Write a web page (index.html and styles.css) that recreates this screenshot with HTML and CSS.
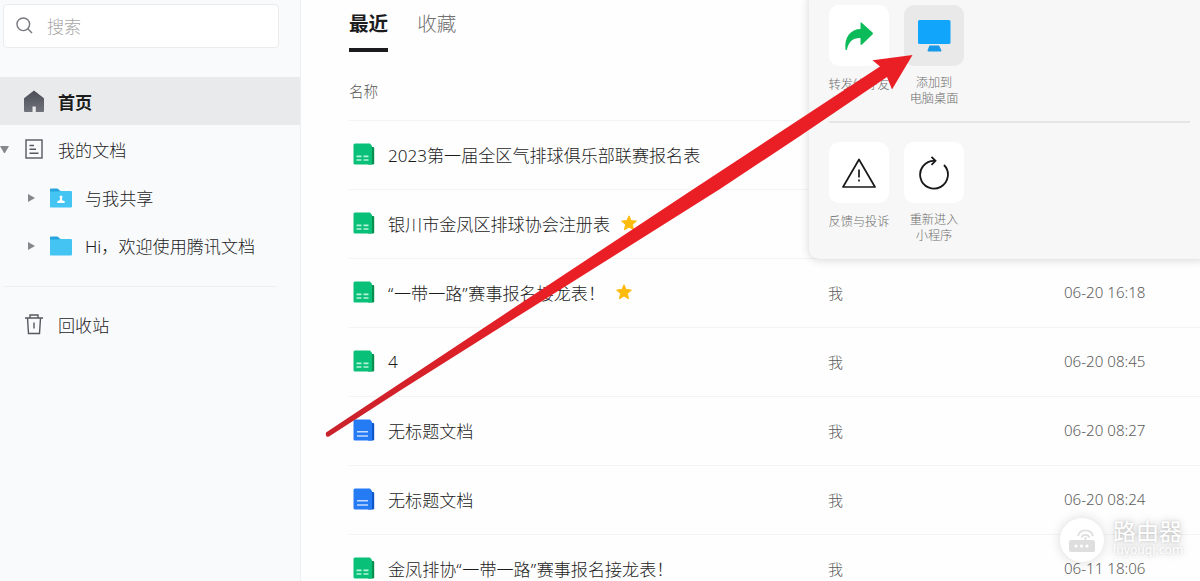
FILE: index.html
```html
<!DOCTYPE html>
<html lang="zh-CN">
<head>
  <meta charset="UTF-8" />
  <title>腾讯文档</title>
  <link rel="stylesheet" href="styles.css">
</head>
<body>
  <svg class="symbols">
    <symbol id="sheet" viewBox="0 0 22 22">
      <path d="M15 4h5.200a1 1 0 0 1 1 1v15.200a1.300 1.300 0 0 1-1.300 1.300H15z" fill="#078f50"/>
      <path d="M2 .5h15L19 3v18.500H2A1.500 1.500 0 0 1 .5 20V2A1.500 1.500 0 0 1 2 .5z" fill="#08c077"/>
      <path d="M3.500 13.300h5M10.500 13.300h5M3.500 17h5M10.500 17h5" stroke="#b4f5d8" stroke-width="1.700"/>
    </symbol>
    <symbol id="doc" viewBox="0 0 22 22">
      <path d="M15 4h5.200a1 1 0 0 1 1 1v15.200a1.300 1.300 0 0 1-1.300 1.300H15z" fill="#1055c9"/>
      <path d="M2 .5h15L19 3v18.500H2A1.500 1.500 0 0 1 .5 20V2A1.500 1.500 0 0 1 2 .5z" fill="#257bf4"/>
      <path d="M4 12.800h11M4 17h11" stroke="#c4dcff" stroke-width="1.600"/>
    </symbol>
    <symbol id="star" viewBox="0 0 16 16">
      <path d="M8 .8l2.100 4.800 5.300.5-4 3.500 1.200 5.200L8 12.100l-4.600 2.700 1.200-5.200-4-3.500 5.300-.5z" fill="#fdbb0c" stroke="#fdbb0c" stroke-linejoin="round"/>
    </symbol>
    <symbol id="folder" viewBox="0 0 22 20">
      <path d="M0 1.500Q0 .5 1 .5h6.500l3 2.500H21v10H0z" fill="#28a4dc"/>
      <path d="M0 3.500h7.500L10.500 3H21q1 0 1 1v14.500q0 1-1 1H1q-1 0-1-1z" fill="#43c4f3"/>
    </symbol>
  </svg>

  <div class="app">
    <div class="sidebar">
      <div class="search">
        <svg width="17" height="17" viewBox="0 0 17 17" fill="none" stroke="#77797e" stroke-width="1.400"><circle cx="7.300" cy="7.300" r="6.300"/><path d="M11.800 11.800l4.200 4.200"/></svg>
        <span>搜索</span>
      </div>
      <div class="nav">
        <div class="nav-item active">
          <svg class="nav-icon" viewBox="0 0 20 22">
            <defs><linearGradient id="roof" x2="0" y2="1"><stop stop-color="#4a4d55"/><stop offset="1" stop-color="#70737c"/></linearGradient></defs>
            <path d="M10 .5l10 7.800V21q0 1-1 1h-7.200v-5.500H8.500V22H1q-1 0-1-1V8.300z" fill="url(#roof)"/>
          </svg>
          <span>首页</span>
        </div>
        <div class="nav-item">
          <i class="caret down"></i>
          <svg class="nav-icon" viewBox="0 0 20 22" fill="none" stroke="#55585e" stroke-width="1.400"><rect x="2" y="2" width="16" height="18"/><path d="M5.500 7.500h4.500M5.500 11.300h6.500M5.500 15.200h9"/></svg>
          <span>我的文档</span>
        </div>
        <div class="nav-item sub">
          <i class="caret"></i>
          <svg class="folder" viewBox="0 0 22 20"><use href="#folder"/><circle cx="11" cy="9" r="1.500" fill="#fff"/><path d="M10.300 9h1.400l.5 3.300 2.500 1v1.700H7.300v-1.700l2.500-1z" fill="#fff"/></svg>
          <span>与我共享</span>
        </div>
        <div class="nav-item sub">
          <i class="caret"></i>
          <svg class="folder"><use href="#folder"/></svg>
          <span>Hi，欢迎使用腾讯文档</span>
        </div>
      </div>
      <div class="nav-item trash">
        <svg class="nav-icon" viewBox="0 0 20 22" fill="none" stroke="#55585e" stroke-width="1.400"><path d="M1 5h18M6 5V2h8v3M3.500 5l1 15.500h11l1-15.500M10 9.500v6"/></svg>
        <span>回收站</span>
      </div>
    </div>

    <div class="main">
      <div class="tabs">
        <div class="tab current">最近</div>
        <div class="tab">收藏</div>
      </div>
      <div class="list-head">名称</div>
      <div class="row">
        <div class="name"><svg class="file"><use href="#sheet"/></svg>2023第一届全区气排球俱乐部联赛报名表</div>
      </div>
      <div class="row">
        <div class="name"><svg class="file"><use href="#sheet"/></svg>银川市金凤区排球协会注册表<svg class="star"><use href="#star"/></svg></div>
      </div>
      <div class="row">
        <div class="name"><svg class="file"><use href="#sheet"/></svg><span><b>“</b>一带一路<b>”</b>赛事报名接龙表！</span><svg class="star"><use href="#star"/></svg></div>
        <div class="owner">我</div>
        <div class="date">06-20 16:18</div>
      </div>
      <div class="row">
        <div class="name"><svg class="file"><use href="#sheet"/></svg>4</div>
        <div class="owner">我</div>
        <div class="date">06-20 08:45</div>
      </div>
      <div class="row">
        <div class="name"><svg class="file"><use href="#doc"/></svg>无标题文档</div>
        <div class="owner">我</div>
        <div class="date">06-20 08:27</div>
      </div>
      <div class="row">
        <div class="name"><svg class="file"><use href="#doc"/></svg>无标题文档</div>
        <div class="owner">我</div>
        <div class="date">06-20 08:24</div>
      </div>
      <div class="row">
        <div class="name"><svg class="file"><use href="#sheet"/></svg><span>金凤排协<b>“</b>一带一路<b>”</b>赛事报名接龙表！</span></div>
        <div class="owner">我</div>
        <div class="date">06-11 18:06</div>
      </div>
    </div>
  </div>

  <div class="menu">
    <div class="menu-group">
      <div class="menu-item">
        <div class="tile"><svg width="30" height="30" viewBox="0 0 30 30"><path d="M1.500 28.500C0 16 7 8 16.500 8V2.500q0-2 1.500-.5l10.500 9.500q1 1 0 2L18 23.500q-1.500 1-1.500-.5v-6C10 16.500 4.500 20 3 28.500q-.7 1-1.500 0z" fill="#0bbb59"/></svg></div>
        <div class="label single">转发给好友</div>
      </div>
      <div class="menu-item">
        <div class="tile pressed"><svg width="34" height="34" viewBox="0 0 34 34" fill="#11a5fb"><rect x="1" y="1" width="32.500" height="24" rx="1.500"/><path d="M12.500 26.500h9.500l2.500 5q0 1-1 1H11.500q-1 0-1-1z" fill="#1599e8"/></svg></div>
        <div class="label">添加到<br>电脑桌面</div>
      </div>
    </div>
    <div class="menu-group">
      <div class="menu-item">
        <div class="tile"><svg width="34" height="34" viewBox="0 0 34 34" fill="none" stroke="#17181a" stroke-width="1.700" stroke-linejoin="round"><path d="M17 3.500L33 31H1z"/><path d="M17 13.500v8M17 23.500v2"/></svg></div>
        <div class="label single">反馈与投诉</div>
      </div>
      <div class="menu-item">
        <div class="tile"><svg width="34" height="34" viewBox="0 0 34 34" fill="none" stroke="#17181a" stroke-width="1.800"><path d="M27 9A13.900 13.900 0 1 1 17.500 4.800"/><path d="M14.500 .8l4 4-4 4"/></svg></div>
        <div class="label">重新进入<br>小程序</div>
      </div>
    </div>
  </div>

  <svg class="arrow" viewBox="0 0 1200 581">
    <defs><linearGradient id="red" gradientUnits="userSpaceOnUse" x1="326" y1="435" x2="560" y2="284"><stop stop-color="#c9222c"/><stop offset="1" stop-color="#ea1f25"/></linearGradient></defs>
    <path d="M326 432.500L390 390L692 190L880 66.500L872.500 60.300L912.500 55L892 89.500L887 77L800 136L720 189L401 390L329 436.500Q325 438 326 432.500z" fill="url(#red)"/>
  </svg>

  <div class="watermark">
    <div class="mark"><svg width="28" height="26" viewBox="0 0 28 26"><rect x="1" y="13" width="26" height="12" rx="2" fill="#dedede"/><g fill="none" stroke="#dedede" stroke-width="1.800"><path d="M10 9a7.800 7.800 0 0 1 15 0M13.500 10.500a4.300 4.300 0 0 1 8 0"/><path d="M17.500 10v4"/></g><g fill="#fff"><circle cx="8" cy="19" r="1.600"/><circle cx="13.500" cy="19" r="1.600"/><circle cx="19" cy="19" r="1.600"/></g></svg></div>
    <div class="mark-text"><strong>路由器</strong><span>luyouqi.com</span></div>
  </div>
</body>
</html>
```
FILE: styles.css
```css
* {
  box-sizing: border-box;
}

body {
  margin: 0;
  height: 581px;
  position: relative;
  overflow: hidden;
  background: #fefefe;
  color: #1c1c1c;
  font-family: "Noto Sans", "Noto Sans CJK SC", sans-serif;
  font-size: 17.080px;
  font-weight: 300;
}

svg {
  display: block;
  flex: none;
}

.symbols {
  position: absolute;
  width: 0;
  height: 0;
}

.app {
  display: flex;
  height: 581px;
}

/* sidebar */
.sidebar {
  width: 301px;
  flex: none;
  padding-top: 4px;
  background: #f9fafc;
  border-right: 1px solid #eff0f2;
}

.search {
  display: flex;
  align-items: center;
  gap: 14px;
  width: 276px;
  height: 44px;
  margin-left: 3px;
  padding: 0 0 1px 12px;
  background: #fff;
  border: 1px solid #ebecee;
  border-radius: 4px;
  color: #a8a8a8;
}

.nav {
  margin-top: 29px;
}

.nav-item {
  display: flex;
  align-items: center;
  height: 48px;
  padding-left: 24px;
  position: relative;
}

.nav-item.active {
  background: #e9eaec;
  font-weight: 700;
}

.nav-icon {
  width: 20px;
  height: 22px;
  margin-right: 14px;
}

.nav-item.sub {
  padding: 1px 0 0 28px;
}

.folder {
  width: 22px;
  height: 20px;
  margin: 0 13px 0 15px;
}

.caret {
  width: 7px;
  border: 4.500px solid transparent;
  border-left: 7px solid #85878a;
  border-right: 0;
}

.caret.down {
  position: absolute;
  left: 0;
  width: 9px;
  border: 4.500px solid transparent;
  border-top: 7px solid #85878a;
  border-bottom: 0;
}

.trash {
  width: 274px;
  height: 77px;
  margin: 17px 0 0 3px;
  padding: 0 0 2px 21px;
  border-top: 1px solid #eeeff1;
}

/* file list */
.main {
  flex: 1;
  padding-left: 48px;
}

.tabs {
  display: flex;
  gap: 29px;
  height: 52px;
  font-size: 19.600px;
}

.tab {
  height: 52px;
  line-height: 48px;
  color: #707070;
}

.tab.current {
  color: #1c1c1e;
  font-weight: 700;
  border-bottom: 4px solid #1c1c1e;
}

.list-head {
  height: 69px;
  line-height: 78px;
  font-size: 14.600px;
  color: #555;
  border-bottom: 1px solid #f4f4f4;
}

.row {
  display: grid;
  grid-template-columns: 479px 236px 1fr;
  align-items: center;
  height: 69px;
  padding-bottom: 2px;
  border-bottom: 1px solid #f4f4f4;
}

.name {
  display: flex;
  align-items: center;
  padding-left: 4px;
}

.name b {
  display: inline-block;
  width: 6px;
  font-weight: 300;
}

.file {
  width: 22px;
  height: 22px;
  margin-right: 13px;
}

.star {
  width: 16px;
  height: 16px;
  margin-left: 11px;
}

.owner,
.date {
  font-size: 15px;
  color: #5c5c5c;
}

.date {
  font-size: 15.100px;
}

/* mini program menu */
.menu {
  position: absolute;
  left: 809px;
  top: -10px;
  width: 401px;
  height: 269px;
  padding: 0 20px;
  background: #f7f7f7;
  border-radius: 10px;
  box-shadow: 0 1px 10px rgba(0, 0, 0, .16);
}

.menu-group {
  display: flex;
  gap: 15px;
  height: 131px;
  padding-top: 15px;
}

.menu-group + .menu-group {
  padding-top: 19px;
  border-top: 2px solid #e6e6e6;
}

.menu-item {
  width: 60px;
}

.tile {
  display: flex;
  align-items: center;
  justify-content: center;
  height: 61px;
  background: #fff;
  border-radius: 10px;
}

.tile.pressed {
  background: #e9e9e9;
}

.label {
  display: flow-root;
  margin: 9px -1px 0;
  font-size: 12.200px;
  line-height: 16px;
  text-align: center;
  white-space: nowrap;
  color: #6e6e6e;
}

.label.single {
  margin-top: 11px;
}

.arrow {
  position: absolute;
  left: 0;
  top: 0;
  width: 1200px;
  height: 581px;
}

.watermark {
  position: absolute;
  left: 1060px;
  top: 518px;
  display: flex;
  align-items: center;
  gap: 9px;
  color: #fff;
}

.mark {
  display: flex;
  align-items: center;
  justify-content: center;
  width: 44px;
  height: 44px;
  border-radius: 50%;
  background: #fff;
  box-shadow: 0 0 12px rgba(0, 0, 0, .15);
}

.mark-text {
  display: flex;
  flex-direction: column;
  padding-bottom: 5px;
  text-shadow: 0 0 3px rgba(0, 0, 0, .16), 0 0 10px rgba(0, 0, 0, .25);
}

.mark-text strong {
  font-size: 23px;
  line-height: 25px;
  font-weight: 400;
}

.mark-text span {
  font-size: 12.200px;
  line-height: 12px;
  font-weight: 400;
}
```
